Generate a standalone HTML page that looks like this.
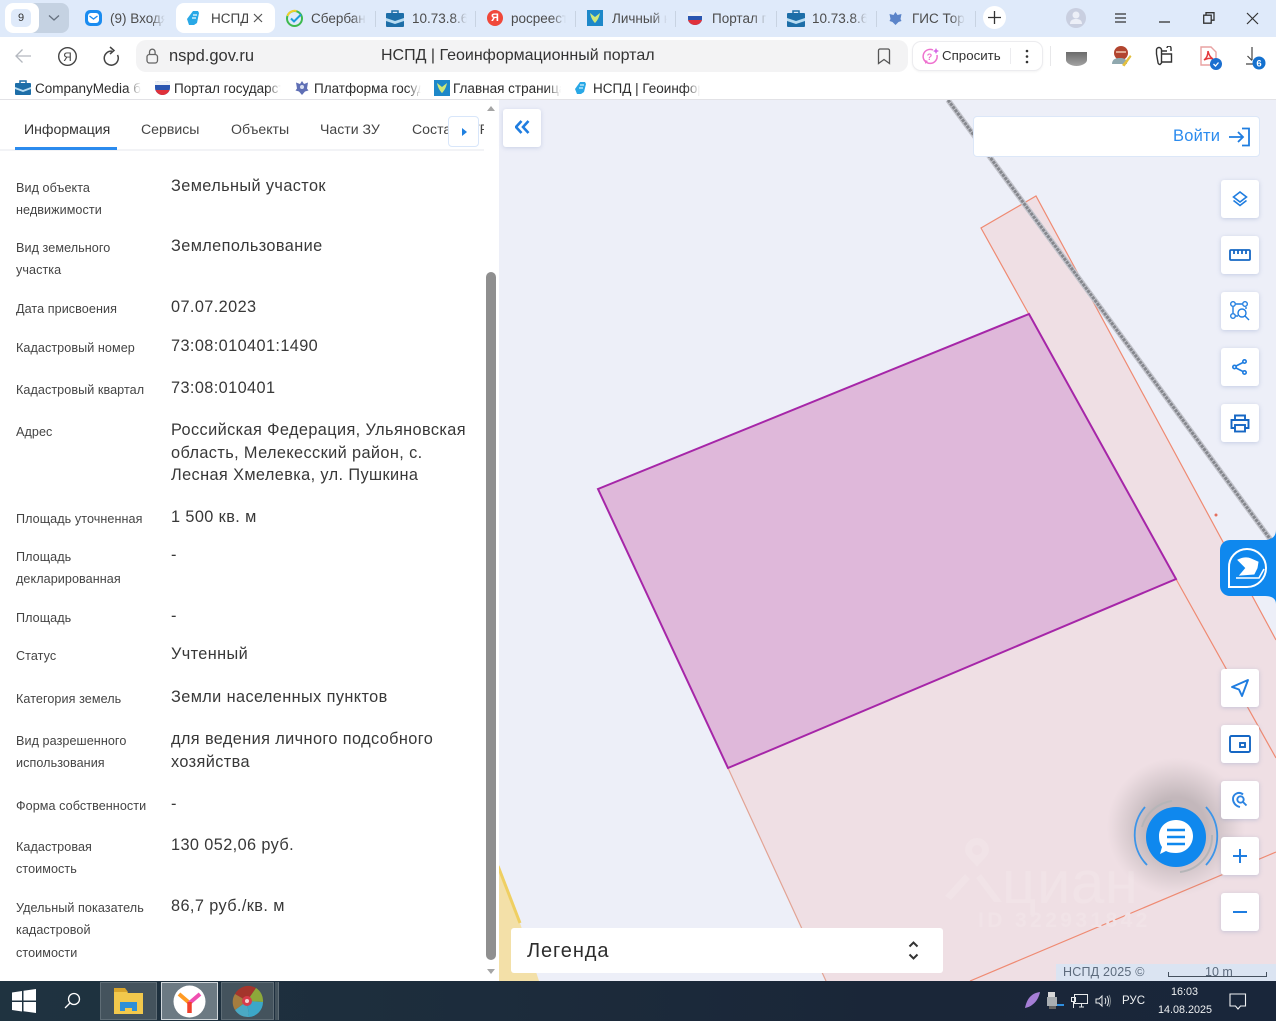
<!DOCTYPE html>
<html lang="ru"><head><meta charset="utf-8"><title>НСПД</title>
<style>
html,body{margin:0;padding:0;width:1280px;height:1025px;overflow:hidden;background:#fff;font-family:"Liberation Sans",sans-serif}
body{filter:blur(.35px)}
.a,.t{position:absolute}
.t{white-space:nowrap}
.tab{top:12px;font-size:13.5px;color:#4c4c4c;line-height:14px;height:14px;overflow:hidden}
.fade:after{content:"";position:absolute;right:0;top:0;width:14px;height:100%;background:linear-gradient(90deg,rgba(223,234,250,0),#dfeafa)}
.sep{position:absolute;top:11px;width:1px;height:16px;background:#c8d3e2}
.bm{top:82px;font-size:13.5px;color:#2c2c2c;line-height:14px;height:15px;overflow:hidden}
.bm:after{content:"";position:absolute;right:0;top:0;width:14px;height:100%;background:linear-gradient(90deg,rgba(255,255,255,0),#fff)}
.l{left:16px;font-size:12.6px;color:#444;line-height:22.6px;letter-spacing:.07px;margin-top:.5px}
.v{left:171px;font-size:16.3px;color:#383838;line-height:22.5px;letter-spacing:.4px}
.tb{top:121px;font-size:14.1px;color:#454545;line-height:16px}
.mb{position:absolute;left:1221px;width:38px;height:38px;background:#fff;border-radius:3px;box-shadow:0 1px 4px rgba(120,140,190,.35);display:flex;align-items:center;justify-content:center}
svg{display:block}
</style></head><body>

<!-- browser tab strip -->
<div class="a" style="left:0;top:0;width:1276px;height:37px;background:#dfeafa"></div>
<div class="a" style="left:5px;top:3px;width:64px;height:30px;background:#c5d2e2;border-radius:8px"></div>
<div class="a" style="left:5px;top:3px;width:34px;height:30px;background:#fff;border-radius:8px"></div>
<div class="a" style="left:11px;top:9px;width:20px;height:18px;background:#dfeafa;border-radius:5px"></div>
<div class="t" style="left:18px;top:12px;font-size:11px;color:#333">9</div>
<svg class="a" style="left:48px;top:14px" width="12" height="8"><path d="M1 1.500l5 4.500 5-4.500" fill="none" stroke="#66717f" stroke-width="1.300"/></svg>

<svg class="a" style="left:84px;top:9px" width="19" height="18"><rect x="1" y="1" width="17" height="16" rx="5" fill="#1a8cf0"/><rect x="4" y="4" width="11" height="10" rx="3" fill="#fff"/><path d="M5.500 7l4 3 4-3" fill="none" stroke="#1a8cf0" stroke-width="1.300"/></svg>
<div class="t tab fade" style="left:110px;width:55px">(9) Входящие</div>
<div class="a" style="left:176px;top:3px;width:99px;height:30px;background:#fff;border-radius:8px"></div>
<svg class="a" style="left:186px;top:10px" width="15" height="16"><path d="M7 1h5l1 2-2 10-3 2H3L1 9z" fill="#29a8e6"/><path d="M7 5h4M6 8h4" stroke="#cfeefc" stroke-width="1.500"/></svg>
<div class="t tab" style="left:211px;width:37px;color:#444">НСПД</div>
<svg class="a" style="left:253px;top:13px" width="10" height="10"><path d="M1 1l8 8M9 1l-8 8" stroke="#555" stroke-width="1.200"/></svg>
<svg class="a" style="left:285px;top:9px" width="19" height="19"><circle cx="9.500" cy="9.500" r="7.500" fill="none" stroke="#3dba4e" stroke-width="2"/><path d="M2.500 7a7.500 7.500 0 0 1 9-5" fill="none" stroke="#f1d02c" stroke-width="2"/><path d="M6 9.500l3 3 7-7" fill="none" stroke="#1c9dd9" stroke-width="2"/></svg>
<div class="t tab fade" style="left:311px;width:55px">Сбербанк</div>
<div class="sep" style="left:375px"></div>
<svg class="a" style="left:386px;top:10px" width="18" height="17"><rect x="6" y="1" width="6" height="4" fill="none" stroke="#1f6fa8" stroke-width="1.500"/><rect x="0" y="3" width="18" height="14" rx="1" fill="#1d6ea8"/><path d="M0 8l9 3 9-3v3l-9 3-9-3z" fill="#b8dcf2"/></svg>
<div class="t tab fade" style="left:412px;width:55px">10.73.8.69</div>
<div class="sep" style="left:475px"></div>
<div class="a" style="left:487px;top:10px;width:16px;height:16px;border-radius:50%;background:#f0483a;color:#fff;font-size:11px;line-height:16px;text-align:center;font-weight:bold">Я</div>
<div class="t tab fade" style="left:511px;width:55px">росреестр</div>
<div class="sep" style="left:575px"></div>
<svg class="a" style="left:587px;top:10px" width="16" height="16"><rect width="16" height="16" fill="#1d88c9"/><path d="M3 3c1 5 3 8 5 10 2-2 4-5 5-10l-5 4z" fill="#cfe878"/></svg>
<div class="t tab fade" style="left:612px;width:55px">Личный кабинет</div>
<div class="sep" style="left:675px"></div>
<svg class="a" style="left:687px;top:11px" width="16" height="15"><path d="M1 1h14v7c0 4-4 6-7 6S1 12 1 8z" fill="#2a55b0"/><path d="M1 1h14v4H1z" fill="#eef1f6"/><path d="M1 9h14c-1 3-4 5-7 5s-6-2-7-5z" fill="#e0313a"/></svg>
<div class="t tab fade" style="left:712px;width:55px">Портал гос</div>
<div class="sep" style="left:776px"></div>
<svg class="a" style="left:787px;top:10px" width="18" height="17"><rect x="6" y="1" width="6" height="4" fill="none" stroke="#1f6fa8" stroke-width="1.500"/><rect x="0" y="3" width="18" height="14" rx="1" fill="#1d6ea8"/><path d="M0 8l9 3 9-3v3l-9 3-9-3z" fill="#b8dcf2"/></svg>
<div class="t tab fade" style="left:812px;width:55px">10.73.8.69</div>
<div class="sep" style="left:876px"></div>
<svg class="a" style="left:888px;top:11px" width="15" height="15"><path d="M7.500 1l2 3 4-1-1 5 1 2-3 1-3 3-3-3-3-1 1-2-1-5 4 1z" fill="#5b84c9"/></svg>
<div class="t tab fade" style="left:912px;width:53px">ГИС Торги</div>
<div class="sep" style="left:975px"></div>
<div class="a" style="left:983px;top:6px;width:23px;height:23px;border-radius:50%;background:#fff"></div>
<svg class="a" style="left:988px;top:11px" width="13" height="13"><path d="M6.500 0v13M0 6.500h13" stroke="#333" stroke-width="1.300"/></svg>
<div class="a" style="left:1066px;top:8px;width:20px;height:20px;border-radius:50%;background:#c9cfe0"></div>
<svg class="a" style="left:1069px;top:10px" width="14" height="16"><circle cx="7" cy="5" r="3.500" fill="#eceff7"/><path d="M1 14c0-4 3-5 6-5s6 1 6 5z" fill="#eceff7"/></svg>
<svg class="a" style="left:1115px;top:13px" width="12" height="10"><path d="M0 1h11M0 5h11M0 9h11" stroke="#333" stroke-width="1.200"/></svg>
<svg class="a" style="left:1159px;top:15px" width="12" height="8"><path d="M0 7h11" stroke="#333" stroke-width="1.300"/></svg>
<svg class="a" style="left:1203px;top:12px" width="12" height="12"><path d="M3 3V.700h8v7.500H8.500M.700 3.200h7.500v8H.700z" fill="none" stroke="#333" stroke-width="1.300"/></svg>
<svg class="a" style="left:1246px;top:12px" width="13" height="13"><path d="M1 1l11 11M12 1L1 12" stroke="#333" stroke-width="1.200"/></svg>

<!-- toolbar -->
<div class="a" style="left:0;top:37px;width:1276px;height:63px;background:#fff;border-bottom:1px solid #e2e2e6;box-sizing:border-box;border-radius:8px 8px 0 0"></div>
<svg class="a" style="left:14px;top:48px" width="18" height="16"><path d="M17 8H2M8.500 1.500L2 8l6.500 6.500" fill="none" stroke="#b4b8bf" stroke-width="1.300"/></svg>
<svg class="a" style="left:57px;top:46px" width="21" height="21"><circle cx="10.500" cy="10.500" r="8.800" fill="none" stroke="#444" stroke-width="1.400"/><text x="10.500" y="15" font-family="Liberation Sans" font-size="12" text-anchor="middle" fill="#444">Я</text></svg>
<svg class="a" style="left:102px;top:46px" width="19" height="20"><path d="M15.500 8a7 7 0 1 1-5.500-3.800" fill="none" stroke="#444" stroke-width="1.500" transform="translate(0 1)"/><path d="M8 1l4 3.500-4 3.500" fill="none" stroke="#444" stroke-width="1.500"/></svg>
<div class="a" style="left:136px;top:40px;width:772px;height:32px;background:#f3f3f4;border-radius:10px"></div>
<svg class="a" style="left:145px;top:47px" width="15" height="18"><rect x="2" y="7.500" width="10.500" height="8.500" rx="2.500" fill="none" stroke="#666" stroke-width="1.300"/><path d="M4.500 7.500V5a2.800 2.800 0 0 1 5.600 0v2.500" fill="none" stroke="#666" stroke-width="1.300"/></svg>
<div class="t" style="left:169px;top:47px;font-size:16.500px;line-height:18px;color:#333">nspd.gov.ru</div>
<div class="t" style="left:381px;top:47px;font-size:16px;line-height:18px;color:#333">НСПД | Геоинформационный портал</div>
<svg class="a" style="left:877px;top:48px" width="14" height="17"><path d="M1.500 2.500a1.500 1.500 0 0 1 1.500-1.500h8a1.500 1.500 0 0 1 1.500 1.500V15.500L7 11.500 1.500 15.500z" fill="none" stroke="#555" stroke-width="1.300"/></svg>
<div class="a" style="left:912px;top:41px;width:131px;height:30px;border:1px solid #ececef;border-radius:9px;box-sizing:border-box;background:#fff;box-shadow:0 1px 2px rgba(0,0,0,.05)"></div>
<svg class="a" style="left:921px;top:47px" width="19" height="18"><path d="M12 3a7 7 0 1 0 4 5" fill="none" stroke="#ee72cf" stroke-width="1.500"/><path d="M7 14l-3 3v-4z" fill="#ee72cf"/><path d="M15 1l1 2 2 1-2 1-1 2-1-2-2-1 2-1z" fill="#d56ae6"/><text x="8.500" y="13" font-family="Liberation Sans" font-size="9" font-weight="bold" text-anchor="middle" fill="#ee72cf">?</text></svg>
<div class="t" style="left:942px;top:48px;font-size:13.300px;line-height:15px;color:#333">Спросить</div>
<div class="a" style="left:1010px;top:48px;width:1px;height:16px;background:#ececef"></div>
<svg class="a" style="left:1025px;top:49px" width="4" height="15"><circle cx="2" cy="2" r="1.300" fill="#333"/><circle cx="2" cy="7.500" r="1.300" fill="#333"/><circle cx="2" cy="13" r="1.300" fill="#333"/></svg>
<div class="a" style="left:1050px;top:46px;width:1px;height:20px;background:#e8e8ea"></div>
<svg class="a" style="left:1066px;top:52px" width="21" height="15"><defs><linearGradient id="g1" x1="0" y1="0" x2="0" y2="1"><stop offset="0" stop-color="#6b6b6b"/><stop offset="1" stop-color="#a3a3a3"/></linearGradient></defs><path d="M0 0h21v8c0 3-5 6-10.500 6S0 11 0 8z" fill="url(#g1)"/></svg>
<svg class="a" style="left:1110px;top:45px" width="22" height="22"><circle cx="11" cy="8" r="7" fill="#b2452f"/><path d="M6 7h10" stroke="#f0c8b0" stroke-width="1.500"/><path d="M2 19c0-5 4-6 8-6s7 1 7 6z" fill="#8fa8ae"/><path d="M12 20l8-10 1.500 1.500-7 10z" fill="#e3bf3d"/></svg>
<svg class="a" style="left:1155px;top:46px" width="19" height="20"><path d="M1.500 4a2.500 2.500 0 0 1 5 0v13l-1.500 1.500c-1 0-2-1-2-2L1.500 8zM6 5h6M12 2a2 2 0 0 1 4 0v3M6.500 8h10v8h-10" fill="none" stroke="#333" stroke-width="1.400"/></svg>
<svg class="a" style="left:1200px;top:46px" width="24" height="25"><path d="M1 1h10l5 5v13H1z" fill="#fff" stroke="#e9a2a2" stroke-width="1.400"/><path d="M8 5c0 4-1 7-4 9 4-2 6-2 9-1-3-2-4-4-5-8z" fill="none" stroke="#e4393c" stroke-width="1.500"/><circle cx="16" cy="18" r="6" fill="#1b6fd0"/><path d="M13.500 18l2 2 3-3.500" fill="none" stroke="#fff" stroke-width="1.300"/></svg>
<svg class="a" style="left:1245px;top:47px" width="22" height="24"><path d="M7 0v13M2.500 9l4.500 4.500M1 17h8" fill="none" stroke="#444" stroke-width="1.200"/><circle cx="14" cy="16" r="6.500" fill="#1471cf"/><text x="14" y="19.500" font-family="Liberation Sans" font-size="9.500" font-weight="bold" text-anchor="middle" fill="#fff">6</text></svg>

<!-- bookmarks -->
<svg class="a" style="left:15px;top:80px" width="16" height="15"><rect x="5" y="1" width="6" height="4" fill="none" stroke="#1f6fa8" stroke-width="1.500"/><rect x="0" y="3" width="16" height="12" rx="1" fill="#1d6ea8"/><path d="M0 7l8 3 8-3v2l-8 3-8-3z" fill="#b8dcf2"/></svg>
<div class="t bm" style="left:35px;width:106px">CompanyMedia бизнес</div>
<svg class="a" style="left:155px;top:81px" width="15" height="14"><path d="M0 1c3-1.500 12-1.500 15 0v6c0 4-4 7-7.500 7S0 11 0 7z" fill="#2a55b0"/><path d="M0 1c3-1.500 12-1.500 15 0v3H0z" fill="#eef1f6"/><path d="M.5 9h14c-1 3-4 5-7 5s-6-2-7-5z" fill="#e0313a"/></svg>
<div class="t bm" style="left:174px;width:107px">Портал государственных</div>
<svg class="a" style="left:294px;top:80px" width="16" height="16"><path d="M8 1l2 3 4-1.500-1 6 1.500 2-3.500 1-3 3.500-3-3.500-3.500-1 1.500-2-1-6L6 4z" fill="#5f6fb5"/><circle cx="8" cy="7" r="2" fill="#d8dff0"/></svg>
<div class="t bm" style="left:314px;width:107px">Платформа государственных</div>
<svg class="a" style="left:434px;top:80px" width="16" height="16"><rect width="16" height="16" fill="#1d88c9"/><path d="M3 3c1 5 3 8 5 10 2-2 4-5 5-10l-5 4z" fill="#cfe878"/></svg>
<div class="t bm" style="left:453px;width:108px">Главная страница</div>
<svg class="a" style="left:574px;top:81px" width="13" height="14"><path d="M6 1h5l1 2-2 8-3 2H3L1 8z" fill="#29a8e6"/><path d="M6 4h4M5 7h4" stroke="#cfeefc" stroke-width="1.300"/></svg>
<div class="t bm" style="left:593px;width:107px">НСПД | Геоинформационный</div>

<!-- map -->
<svg class="a" style="left:498px;top:100px" width="778" height="881" viewBox="498 100 778 881">
<rect x="498" y="100" width="778" height="881" fill="#edeff8"/>
<path d="M498 866L520 923L539 981H498Z" fill="#f3e0a8"/>
<path d="M498 866L520 923" stroke="#efcf62" stroke-width="3" fill="none"/>
<path d="M981 228L1036 196L1276 641V981H826L728 768L1176 579Z" fill="#efdfe4"/>
<path d="M1176 579L1276 758V640L1036 196L981 228Z" fill="#efdfe4"/>
<path d="M826 981L728 768" stroke="#e2a394" stroke-width="1.200" fill="none"/>
<path d="M1176 579L981 228L1036 196L1276 640M1176 579L1276 758M970 981L1276 852" stroke="#ef8a72" stroke-width="1.200" fill="none"/>
<path d="M948 100L1276 547" stroke="#c3c4cc" stroke-width="5.500" fill="none"/>
<path d="M948 100L1276 547" stroke="#85878d" stroke-width="3" stroke-dasharray="3 1" fill="none"/>
<path d="M1029 314L598 489L728 768L1176 579Z" fill="#dfb8da" stroke="#a626a8" stroke-width="2"/>
<circle cx="1216" cy="515" r="1.500" fill="#e4705f"/>
<g fill="#f1e3e7">
<path d="M977 838a12 12 0 0 1 12 12c0 6-7 10-12 17-5-7-12-11-12-17a12 12 0 0 1 12-12zm0 7a5 5 0 1 0 0 10 5 5 0 0 0 0-10z"/>
<path d="M945 896l20-22 5 5-19 21zM994 902l-18-24 5-4 21 28z"/>
<text x="1002" y="903" font-family="Liberation Sans" font-size="60" letter-spacing=".5">циан</text>
<text x="978" y="927" font-family="Liberation Sans" font-size="21" font-weight="bold" letter-spacing="3.400">ID 322931842</text>
</g>
</svg>

<!-- left panel -->
<div class="a" style="left:0;top:100px;width:499px;height:881px;background:#fff"></div>
<div class="a" style="left:0;top:149px;width:484px;height:2px;background:#f2f3f6"></div>
<div class="a" style="left:15px;top:147px;width:102px;height:3px;background:#2b8bee"></div>
<div class="t tb" style="left:24px;color:#333">Информация</div>
<div class="t tb" style="left:141px">Сервисы</div>
<div class="t tb" style="left:231px">Объекты</div>
<div class="t tb" style="left:320px">Части ЗУ</div>
<div class="t tb" style="left:412px;width:72px;overflow:hidden">Состав ЕГРН</div>
<div class="a" style="left:448px;top:116px;width:31px;height:31px;background:#fff;border-radius:4px;border:1px solid #d8e6fa;box-sizing:border-box"></div>
<svg class="a" style="left:461px;top:128px" width="6" height="8"><path d="M1 0l5 4-5 4z" fill="#1f80e0"/></svg>
<svg class="a" style="left:486px;top:105px" width="10" height="7"><path d="M5 1l4 5H1z" fill="#a5a5a5"/></svg>
<div class="a" style="left:486px;top:272px;width:10px;height:688px;background:#8f8f8f;border-radius:5px"></div>
<svg class="a" style="left:486px;top:968px" width="10" height="7"><path d="M5 6L1 1h8z" fill="#a5a5a5"/></svg>

<div class="t l" style="top:176px">Вид объекта<br>недвижимости</div>
<div class="t v" style="top:175px">Земельный участок</div>
<div class="t l" style="top:236px">Вид земельного<br>участка</div>
<div class="t v" style="top:235px">Землепользование</div>
<div class="t l" style="top:297px">Дата присвоения</div>
<div class="t v" style="top:296px">07.07.2023</div>
<div class="t l" style="top:336px">Кадастровый номер</div>
<div class="t v" style="top:335px">73:08:010401:1490</div>
<div class="t l" style="top:378px">Кадастровый квартал</div>
<div class="t v" style="top:377px">73:08:010401</div>
<div class="t l" style="top:420px">Адрес</div>
<div class="t v" style="top:419px">Российская Федерация, Ульяновская<br>область, Мелекесский район, с.<br>Лесная Хмелевка, ул. Пушкина</div>
<div class="t l" style="top:507px">Площадь уточненная</div>
<div class="t v" style="top:506px">1 500 кв. м</div>
<div class="t l" style="top:545px">Площадь<br>декларированная</div>
<div class="t v" style="top:544px">-</div>
<div class="t l" style="top:606px">Площадь</div>
<div class="t v" style="top:605px">-</div>
<div class="t l" style="top:644px">Статус</div>
<div class="t v" style="top:643px">Учтенный</div>
<div class="t l" style="top:687px">Категория земель</div>
<div class="t v" style="top:686px">Земли населенных пунктов</div>
<div class="t l" style="top:729px">Вид разрешенного<br>использования</div>
<div class="t v" style="top:728px">для ведения личного подсобного<br>хозяйства</div>
<div class="t l" style="top:794px">Форма собственности</div>
<div class="t v" style="top:793px">-</div>
<div class="t l" style="top:835px">Кадастровая<br>стоимость</div>
<div class="t v" style="top:834px">130 052,06 руб.</div>
<div class="t l" style="top:896px">Удельный показатель<br>кадастровой<br>стоимости</div>
<div class="t v" style="top:895px">86,7 руб./кв. м</div>

<!-- map controls -->
<div class="a" style="left:503px;top:109px;width:38px;height:38px;background:#fff;border-radius:3px;box-shadow:0 1px 4px rgba(120,140,190,.3)"></div>
<svg class="a" style="left:515px;top:120px" width="15" height="14"><path d="M6.500 1L1 7l5.500 6M13.500 1L8 7l5.500 6" fill="none" stroke="#1f7de0" stroke-width="2.600"/></svg>

<div class="a" style="left:973px;top:116px;width:287px;height:41px;background:#fff;border:1px solid #dce7f8;border-radius:4px;box-sizing:border-box"></div>
<div class="t" style="left:1173px;top:127px;font-size:16.500px;line-height:19px;color:#2b8bee;letter-spacing:.2px">Войти</div>
<svg class="a" style="left:1228px;top:127px" width="23" height="20"><path d="M1 10h14M10 5l5 5-5 5M14 1.500h7v17h-7" fill="none" stroke="#1f7de0" stroke-width="1.800"/></svg>

<div class="mb" style="top:180px"><svg width="18" height="18" fill="none" stroke="#1f7de0" stroke-width="1.600"><path d="M9 2l6.500 5L9 12 2.500 7z"/><path d="M2.500 10.500L9 15.500l6.500-5"/></svg></div>
<div class="mb" style="top:236px"><svg width="24" height="14" fill="none" stroke="#1667c4" stroke-width="1.800"><rect x="2" y="2" width="20" height="10" rx="1"/><path d="M6 2v4M10 2v4M14 2v4M18 2v4"/></svg></div>
<div class="mb" style="top:292px"><svg width="22" height="22" fill="none" stroke="#1f7de0" stroke-width="1.400"><circle cx="4" cy="4" r="2.300"/><circle cx="16" cy="4" r="2.300"/><circle cx="4" cy="16" r="2.300"/><path d="M7 4h6M4 7v6M17 7v2M7 16h2"/><circle cx="13" cy="13" r="4"/><path d="M16 16l4 4"/></svg></div>
<div class="mb" style="top:348px"><svg width="18" height="18" fill="none" stroke="#1f7de0" stroke-width="1.600"><circle cx="13.500" cy="3.500" r="1.700"/><circle cx="3.500" cy="9" r="1.700"/><circle cx="13.500" cy="14.500" r="1.700"/><path d="M5 8l7-3.500M5 10l7 3.500"/></svg></div>
<div class="mb" style="top:404px"><svg width="20" height="19" fill="none" stroke="#1667c4" stroke-width="1.900"><path d="M5 6V1.500h10V6M5 14H1.500V6h17v8H15"/><rect x="5" y="11" width="10" height="6.500"/></svg></div>

<!-- cian badge -->
<svg class="a" style="left:1220px;top:530px" width="56" height="74"><path d="M56 0C56 7 51 10 45 10H10A10 10 0 0 0 0 20V56A10 10 0 0 0 10 66H45C51 66 56 68 56 74Z" fill="#0f88ee"/></svg>
<svg class="a" style="left:1226px;top:547px" width="44" height="43" fill="none" stroke="#fff"><path d="M21 2a19 19 0 1 1 0 38H3V21A18 18 0 0 1 21 2z" stroke-width="2"/><path d="M12 13c4-2 9-3 13-1l7 3-1 6-3 6-14 1 6-7z" fill="#fff" stroke-width="1"/><path d="M10 31h23l5-9" stroke-width="1.600"/></svg>

<div class="mb" style="top:669px"><svg width="20" height="20" fill="none" stroke="#1f7de0" stroke-width="1.900"><path d="M18 2L2 9l7 2.500L12 18z" stroke-linejoin="round"/></svg></div>
<div class="mb" style="top:725px"><svg width="24" height="20" fill="none" stroke="#1667c4" stroke-width="1.900"><rect x="2" y="2" width="20" height="16" rx="1.500"/><rect x="12" y="9" width="5" height="4"/></svg></div>

<!-- chat shadow -->
<div class="a" style="left:1106px;top:757px;width:140px;height:140px;border-radius:50%;background:radial-gradient(circle,rgba(80,80,80,.28) 30%,rgba(80,80,80,.13) 50%,rgba(80,80,80,.03) 64%,rgba(80,80,80,0) 70%)"></div>

<div class="mb" style="top:781px"><svg width="18" height="18" fill="none" stroke="#2b84e2" stroke-width="1.900"><path d="M9 16C4 15 2 11 2 8a6 6 0 0 1 10-4.500"/><circle cx="9.500" cy="8.500" r="3.200"/><path d="M12 11l3.500 3.500"/></svg></div>
<div class="mb" style="top:837px"><svg width="16" height="16"><path d="M8 1v14M1 8h14" stroke="#1f7de0" stroke-width="2"/></svg></div>
<div class="mb" style="top:893px"><svg width="16" height="4"><path d="M1 2h14" stroke="#1f7de0" stroke-width="2"/></svg></div>

<!-- chat bubble -->
<svg class="a" style="left:1126px;top:790px" width="100" height="90" viewBox="1126 790 100 90" fill="none" stroke-width="1.800">
<path d="M1145 807A43 43 0 0 0 1147 865M1206 807A43 43 0 0 1 1206 865" stroke="#3d95e8"/>
<path d="M1142 827A36 36 0 0 1 1172 801M1212 835A36 36 0 0 1 1180 872" stroke="#b5b5b8" stroke-width="2"/>
<circle cx="1176" cy="837" r="30" fill="#0f88ee" stroke="none"/>
<path d="M1176 820c10 0 17 7 17 16s-7 17-17 17c-4 0-7-.5-10-2l-6 3 2-7c-2-3-3-6-3-11 0-9 7-16 17-16z" fill="#fff" stroke="none"/>
<path d="M1167 830h18M1167 837h18M1167 844h18" stroke="#0f88ee" stroke-width="2.600"/>
</svg>

<!-- legend -->
<div class="a" style="left:511px;top:928px;width:432px;height:45px;background:#fff;border-radius:3px"></div>
<div class="t" style="left:527px;top:940px;font-size:20px;line-height:23px;color:#2d2d2d;letter-spacing:.9px">Легенда</div>
<svg class="a" style="left:907px;top:940px" width="13" height="21" fill="none" stroke="#333" stroke-width="2"><path d="M2.500 6.500L6.500 2.500l4 4M2.500 14.500l4 4 4-4"/></svg>

<!-- copyright / scale -->
<div class="a" style="left:1056px;top:964px;width:220px;height:17px;background:#dbe4f2"></div>
<div class="t" style="left:1063px;top:965px;font-size:12.500px;line-height:15px;color:#5d6b7d;letter-spacing:.2px">НСПД 2025 ©</div>
<div class="t" style="left:1205px;top:965px;font-size:12.500px;line-height:14px;color:#5d6b7d">10 m</div>
<div class="a" style="left:1168px;top:972px;width:99px;height:5px;border:1px solid #45505e;border-top:none;box-sizing:border-box"></div>

<!-- taskbar -->
<div class="a" style="left:0;top:981px;width:1276px;height:40px;background:linear-gradient(90deg,#1f3340,#1a2638 70%,#19263a)"></div>
<svg class="a" style="left:12px;top:989px" width="24" height="24"><path d="M0 3.500l10-1.500v9.500H0zM11.500 1.800L24 0v11.500H11.500zM0 13h10v9.500l-10-1.500zM11.500 13H24v11l-12.500-1.800z" fill="#fff"/></svg>
<svg class="a" style="left:63px;top:992px" width="18" height="18" fill="none" stroke="#fff" stroke-width="1.300"><circle cx="11" cy="7" r="5.500"/><path d="M7 11l-5 5"/></svg>
<div class="a" style="left:100px;top:982px;width:57px;height:38px;background:#44535d;border:1px solid #5f6d76;box-sizing:border-box"></div>
<svg class="a" style="left:114px;top:988px" width="29" height="26"><path d="M0 2h12l2 3h15v21H0z" fill="#f2c84c"/><path d="M0 0h11l3 4H0z" fill="#d9a52b"/><rect x="6" y="14" width="17" height="9" fill="#2f8fd6"/><rect x="11" y="20" width="7" height="6" fill="#f2c84c"/></svg>
<div class="a" style="left:161px;top:982px;width:57px;height:38px;background:#6c7a83;border:1px solid #d0d6da;box-sizing:border-box"></div>
<svg class="a" style="left:173px;top:985px" width="33" height="33"><circle cx="16.500" cy="16.500" r="16" fill="#fff"/><path d="M6 9l10.500 9" stroke="#ff9b23" stroke-width="4"/><path d="M27 9L16.500 18" stroke="#f04fb0" stroke-width="4"/><path d="M16.500 17v11" stroke="#f0402c" stroke-width="4.500"/></svg>
<div class="a" style="left:221px;top:982px;width:53px;height:38px;background:#44535d;border:1px solid #5f6d76;box-sizing:border-box"></div>
<div class="a" style="left:275px;top:982px;width:3px;height:38px;background:#44535d;border-right:1px solid #5f6d76"></div>
<svg class="a" style="left:231px;top:985px" width="33" height="33"><path d="M16 16L4 9a15 15 0 0 1 21-6z" fill="#a4352c"/><path d="M16 16l9-13a15 15 0 0 1 7 14z" fill="#8da83a"/><path d="M16 16l16 1a15 15 0 0 1-14 15z" fill="#3ca7c8"/><path d="M16 16l2 16A15 15 0 0 1 4 25z" fill="#4ba9c4"/><path d="M16 16L4 25A15 15 0 0 1 4 9z" fill="#a67d3f"/><circle cx="16" cy="16" r="5" fill="#d83c4b"/><circle cx="16" cy="16" r="2" fill="#f0d4d4"/></svg>

<svg class="a" style="left:1024px;top:992px" width="17" height="17"><path d="M16 0C8 1 3 6 1 16c6-1 13-6 15-16z" fill="#a57ed6"/></svg>
<svg class="a" style="left:1047px;top:992px" width="18" height="18"><rect x="1" y="0" width="7" height="5" fill="#d8d8d8"/><rect x="0" y="5" width="10" height="9" fill="#a9aeb2"/><rect x="2" y="14" width="7" height="3" fill="#666"/><path d="M10 13h7" stroke="#2f8fe0" stroke-width="2"/></svg>
<svg class="a" style="left:1071px;top:994px" width="18" height="16" fill="none" stroke="#e8eaec" stroke-width="1"><rect x="3.500" y=".5" width="13" height="9"/><path d="M.5 3.500h4v4h-4zM2.500 8v6M8 13h5M10.500 10v3"/></svg>
<svg class="a" style="left:1095px;top:994px" width="17" height="14" fill="none" stroke="#e8eaec" stroke-width="1"><path d="M1 5h3l3-3v10l-3-3H1zM10 4c1 2 1 4 0 6M12 2c2 3 2 7 0 10"/><path d="M14 1c2 4 2 8 0 12" stroke="#7a838a"/></svg>
<div class="t" style="left:1122px;top:994px;font-size:11.500px;line-height:14px;color:#eef0f2">РУС</div>
<div class="t" style="left:1171px;top:985px;font-size:10.800px;line-height:14px;color:#eef0f2">16:03</div>
<div class="t" style="left:1158px;top:1003px;font-size:10.800px;line-height:14px;color:#eef0f2">14.08.2025</div>
<svg class="a" style="left:1229px;top:993px" width="18" height="18" fill="none" stroke="#f0f2f4" stroke-width="1.100"><path d="M1 1h15.500v12h-5l-2.500 3-2.500-3H1z"/></svg>
</body></html>
